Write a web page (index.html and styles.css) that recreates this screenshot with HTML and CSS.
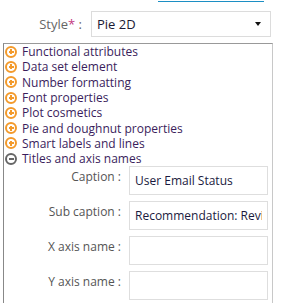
FILE: index.html
```html
<!DOCTYPE html>
<html lang="en">
  <head>
    <meta charset="UTF-8" />
    <title>Chart properties</title>
    <link rel="stylesheet" href="styles.css">
  </head>
  <body>
    <div class="tab-line"></div>

    <div class="style-row">
      <label class="style-label">Style<span class="req">*</span> :</label>
      <div class="select">
        <span>Pie 2D</span>
        <span class="arrow"></span>
      </div>
    </div>

    <div class="panel">
      <ul class="tree">
        <li><span class="icon plus"></span>Functional attributes</li>
        <li><span class="icon plus"></span>Data set element</li>
        <li><span class="icon plus"></span>Number formatting</li>
        <li><span class="icon plus"></span>Font properties</li>
        <li><span class="icon plus"></span>Plot cosmetics</li>
        <li><span class="icon plus"></span>Pie and doughnut properties</li>
        <li><span class="icon plus"></span>Smart labels and lines</li>
        <li><span class="icon minus"></span>Titles and axis names</li>
      </ul>

      <div class="fields">
        <div class="field">
          <label>Caption :</label>
          <input type="text" value="User Email Status" />
        </div>
        <div class="field">
          <label>Sub caption :</label>
          <input type="text" value="Recommendation: Review" />
        </div>
        <div class="field">
          <label>X axis name :</label>
          <input type="text" value="" />
        </div>
        <div class="field">
          <label>Y axis name :</label>
          <input type="text" value="" />
        </div>
      </div>
    </div>
  </body>
</html>
```

FILE: styles.css
```css
* {
  margin: 0;
  padding: 0;
  box-sizing: border-box;
}
body {
  font-family: "Open Sans", sans-serif;
  font-size: 12px;
  background-color: #fff;
  width: 286px;
  overflow: hidden;
}

.tab-line {
  margin: 1px 0 0 158px;
  width: 106px;
  height: 1px;
  background-color: #1c8fc4;
}

.style-row {
  display: flex;
  align-items: center;
  margin-top: 9px;
  height: 26px;
}

.style-label {
  width: 83px;
  text-align: right;
  color: #666;
  font-size: 13px;
  padding-right: 1px;
}

.req {
  color: #c2377f;
}

.select {
  margin-left: 8px;
  width: 180px;
  height: 26px;
  border: 1px solid #dcdcdc;
  display: flex;
  align-items: center;
  justify-content: space-between;
  padding: 0 9px 0 5px;
  font-size: 13px;
  color: #1a1a33;
}

.arrow {
  width: 0;
  height: 0;
  border-left: 3px solid transparent;
  border-right: 3px solid transparent;
  border-top: 4px solid #111;
}

.panel {
  margin: 6px 0 0 3px;
  width: 270px;
  height: 270px;
  border: 1px solid #c8c8c8;
  border-top-color: #999;
  border-left-color: #888;
}

.tree {
  list-style: none;
}

.tree li {
  display: flex;
  align-items: center;
  height: 15.3px;
  line-height: 15px;
  color: #3a1d5c;
  white-space: nowrap;
}

.icon {
  position: relative;
  flex: none;
  width: 12px;
  height: 12px;
  border-radius: 50%;
  border: 2px solid #f39a2b;
  margin: 0 5px 0 1px;
}

.icon::before,
.icon.plus::after {
  content: "";
  position: absolute;
  background-color: #f39a2b;
}

.icon::before {
  left: 1.5px;
  right: 1.5px;
  top: 3px;
  height: 2px;
}

.icon.plus::after {
  top: 1.5px;
  bottom: 1.5px;
  left: 3px;
  width: 2px;
}

.icon.minus {
  border-color: #666;
}

.icon.minus::before {
  background-color: #666;
}

.fields {
  display: flex;
  flex-direction: column;
  gap: 6px;
}

.field {
  display: grid;
  grid-template-columns: 117px 139px;
  column-gap: 8px;
  align-items: start;
}

.field label {
  text-align: right;
  color: #555;
  line-height: 16px;
  padding-top: 3px;
  white-space: nowrap;
}

.field input {
  height: 29px;
  width: 139px;
  border: 1px solid #dedede;
  padding: 0 5px;
  font-family: "Open Sans", sans-serif;
  font-size: 12px;
  color: #1a1a40;
  outline: none;
}
```
